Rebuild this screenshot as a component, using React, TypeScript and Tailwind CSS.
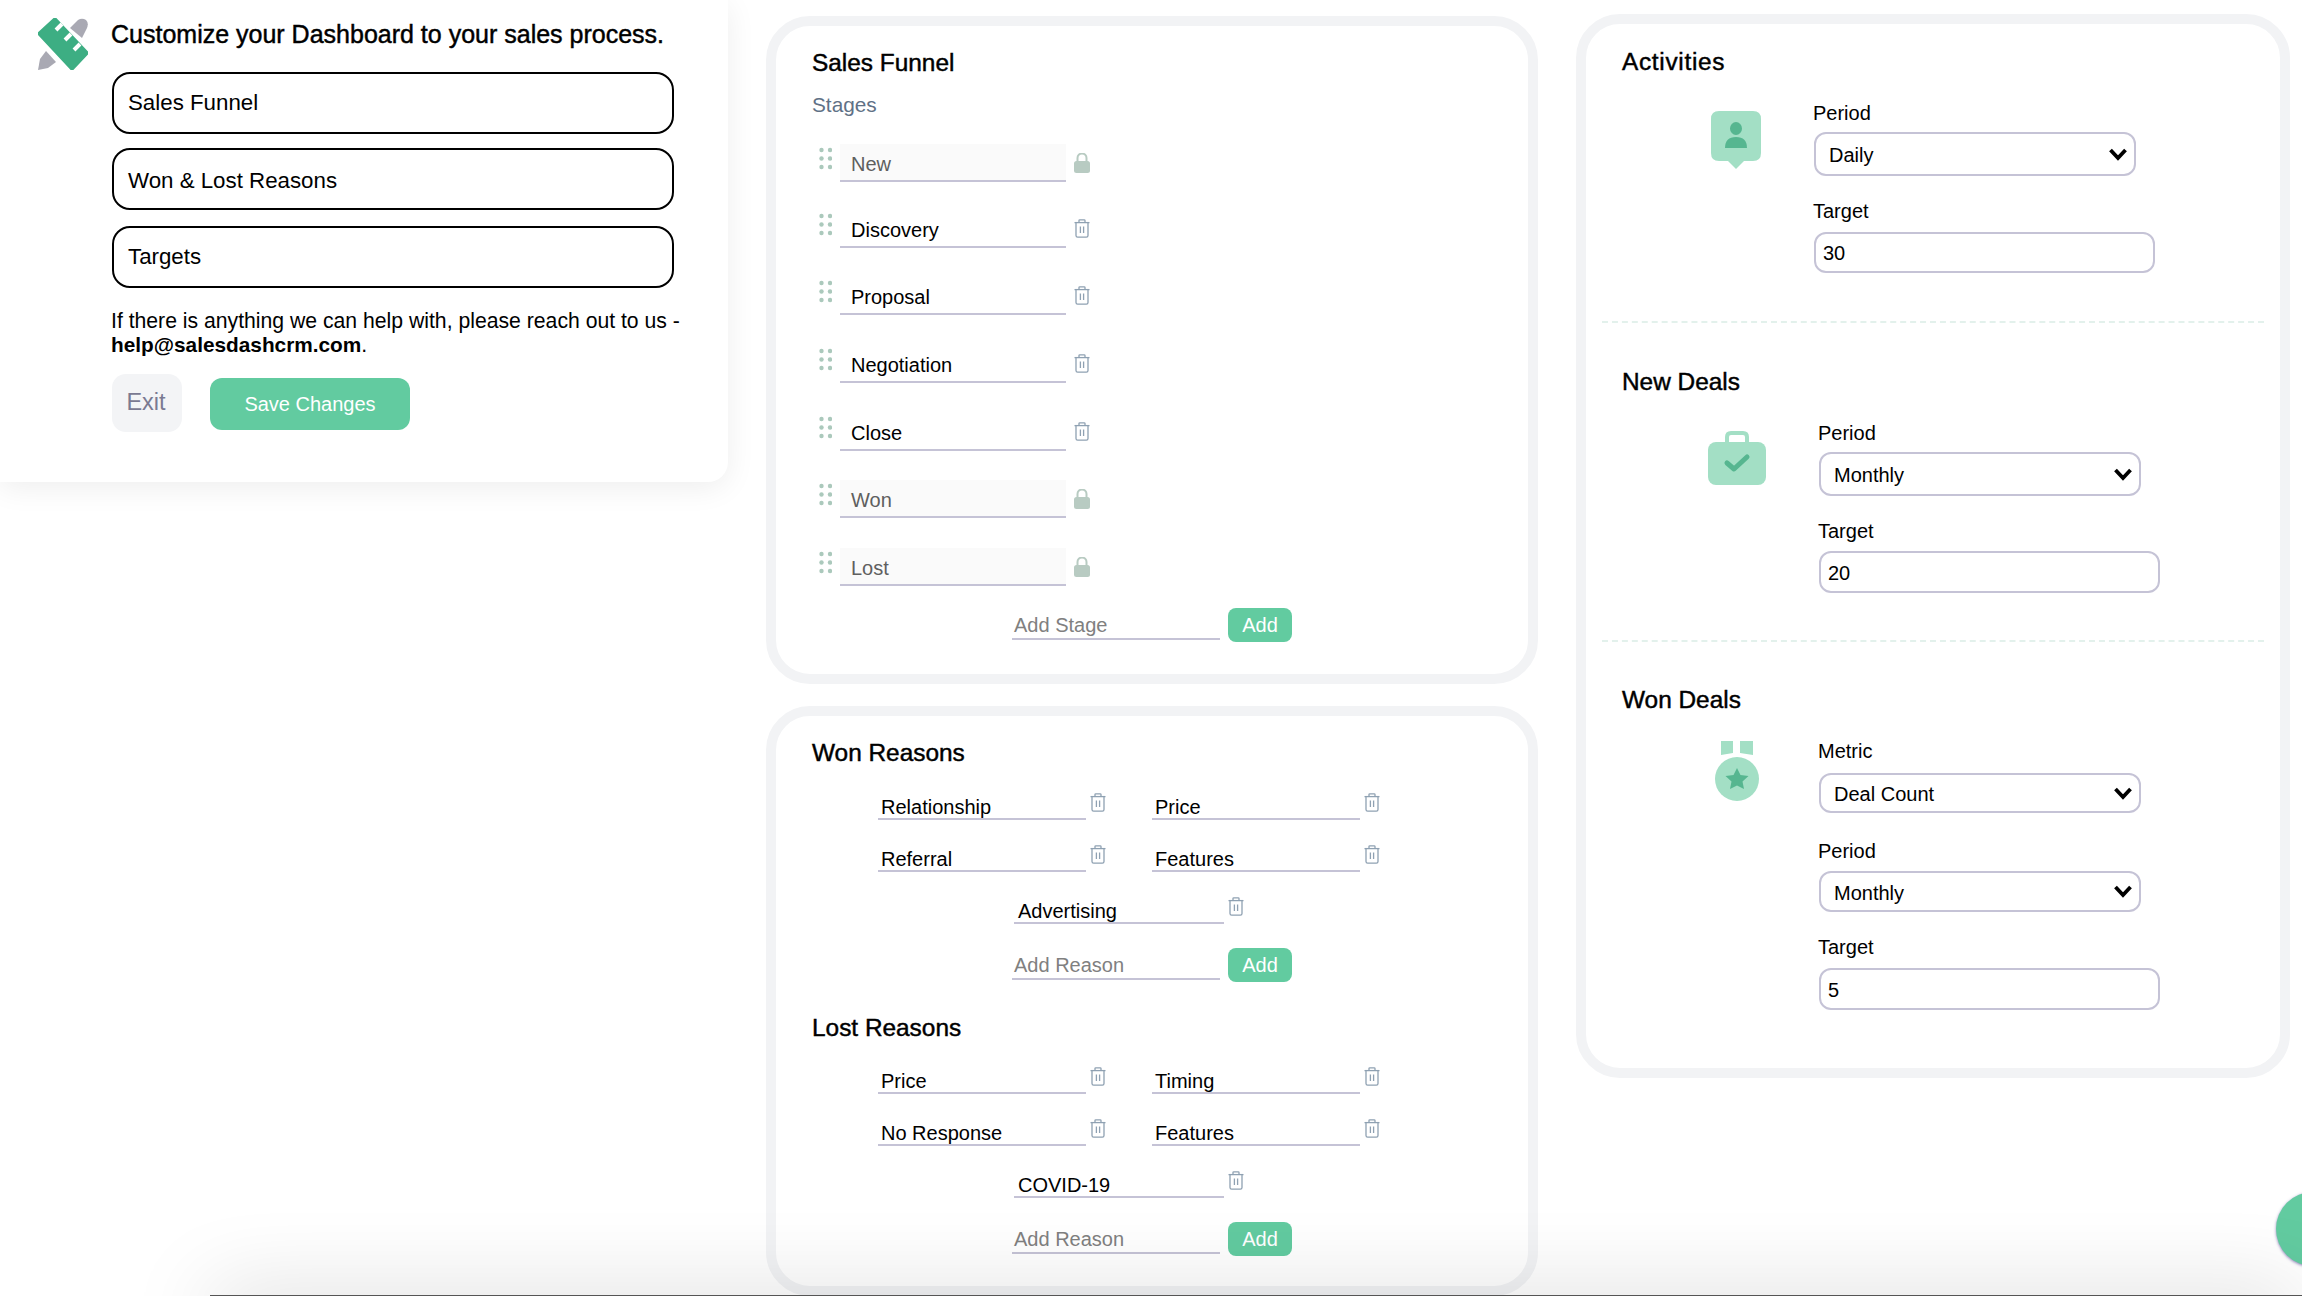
import React from "react";

function Logo() {
  return (
    <svg width="50" height="52" viewBox="0 0 50 52" className="block">
      <path d="M32 10 L40 2 Q44 -0.5 48 2 Q51 5 49 10 L44 20 Z" fill="#a9a9b3" />
      <path d="M0 52 L2 41 L8 33 L18 44 L10 50 Z" fill="#a9a9b3" />
      <path d="M17 0 L0 15.5 L34 52 L50 35 Z" fill="#3dae83" stroke="#3dae83" strokeWidth="2" strokeLinejoin="round" />
      <path d="M24 6 L18 12 M33 16 L27 22 M42 26 L36 32" stroke="#ffffff" strokeWidth="4" fill="none" />
    </svg>
  );
}

function Trash() {
  return (
    <svg width="16" height="19" viewBox="0 0 16 19" fill="none" stroke="#8fa1b2" strokeWidth="1.3" className="block shrink-0">
      <path d="M0.5 3.6 H15.5" />
      <path d="M5 3.4 V1.6 Q5 0.8 5.8 0.8 H10.2 Q11 0.8 11 1.6 V3.4" />
      <path d="M2 3.8 V16.6 Q2 18.2 3.6 18.2 H12.4 Q14 18.2 14 16.6 V3.8" />
      <path d="M6.4 7.5 V14 M9.6 7.5 V14" />
    </svg>
  );
}

function Lock() {
  return (
    <svg width="16" height="20" viewBox="0 0 16 20" className="block shrink-0">
      <path d="M3.5 9 V5 A4.5 4.5 0 0 1 12.5 5 V9" fill="none" stroke="#b8cbc2" strokeWidth="2" />
      <rect x="0" y="8" width="16" height="12" rx="2.5" fill="#b8cbc2" />
    </svg>
  );
}

function Dots() {
  const ys = [3, 11.5, 20];
  return (
    <svg width="13" height="23" viewBox="0 0 13 23" className="block shrink-0 mt-[3px]">
      {ys.map((y) => (
        <g key={y} fill="#abc9bc">
          <circle cx="2.5" cy={y} r="2.2" />
          <circle cx="11" cy={y} r="2.2" />
        </g>
      ))}
    </svg>
  );
}

function Chevron() {
  return (
    <svg width="18" height="13" viewBox="0 0 18 13" className="block" fill="none" stroke="#000" strokeWidth="3.8">
      <path d="M1.5 2 L9 10 L16.5 2" />
    </svg>
  );
}

function PersonIcon() {
  return (
    <svg width="50" height="58" viewBox="0 0 50 58" className="block">
      <path d="M8 0 H42 Q50 0 50 8 V42 Q50 50 42 50 H33 L25 58 L17 50 H8 Q0 50 0 42 V8 Q0 0 8 0 Z" fill="#a3dfc5" />
      <ellipse cx="25" cy="17.5" rx="6" ry="6.5" fill="#56b690" />
      <path d="M14 37 Q14 26 25 26 Q36 26 36 37 Z" fill="#56b690" />
    </svg>
  );
}

function CaseIcon() {
  return (
    <svg width="58" height="54" viewBox="0 0 58 54" className="block">
      <path d="M19 11 V6 Q19 2 23 2 H35 Q39 2 39 6 V11" fill="none" stroke="#a3dfc5" strokeWidth="4" />
      <rect x="0" y="11" width="58" height="43" rx="8" fill="#a3dfc5" />
      <path d="M19 32 L26 38 L39 26" fill="none" stroke="#56b690" strokeWidth="5" strokeLinecap="round" strokeLinejoin="round" />
    </svg>
  );
}

function MedalIcon() {
  return (
    <svg width="44" height="60" viewBox="0 0 44 60" className="block">
      <path d="M6 0 H18 V12 L6 14 Z" fill="#a3dfc5" />
      <path d="M25 0 H38 V14 L25 12 Z" fill="#a3dfc5" />
      <circle cx="22" cy="38" r="22" fill="#a3dfc5" />
      <path d="M22 27 L25.5 34 L33.5 35 L27.5 40.5 L29 48 L22 44.5 L15 48 L16.5 40.5 L10.5 35 L18.5 34 Z" fill="#56b690" />
    </svg>
  );
}

const titleCls =
  "h-[30px] text-[24.4px] leading-[30px] text-black [-webkit-text-stroke:0.45px_#000]";

function SideButton({ label, mt, pad }: { label: string; mt: string; pad?: string }) {
  return (
    <button className={`${mt} ${pad ?? ""} ml-px flex h-[62px] w-[562px] items-center rounded-[18px] border-[2.5px] border-black bg-white pl-[14px] text-left text-[22.3px] text-black`}>
      {label}
    </button>
  );
}

const stages = [
  { name: "New", locked: true, mt: "mt-[26px]" },
  { name: "Discovery", locked: false, mt: "mt-[28px]" },
  { name: "Proposal", locked: false, mt: "mt-[29px]" },
  { name: "Negotiation", locked: false, mt: "mt-[30px]" },
  { name: "Close", locked: false, mt: "mt-[30px]" },
  { name: "Won", locked: true, mt: "mt-[29px]" },
  { name: "Lost", locked: true, mt: "mt-[30px]" },
];

function StageRow({ name, locked, mt }: { name: string; locked: boolean; mt: string }) {
  return (
    <div className={`${mt} ml-[6px] flex h-[38px] items-start`}>
      <Dots />
      <div
        className={`ml-[8px] flex h-[38px] w-[226px] items-center border-b-2 border-[#c5c3d6] pl-[11px] pt-[3px] text-[20px] ${
          locked ? "bg-[#fafafa] text-[#5f5f5f]" : "text-black"
        }`}
      >
        {name}
      </div>
      <div className={`ml-[8px] flex h-[38px] items-center ${locked ? "" : "pb-[2px]"}`}>
        {locked ? <Lock /> : <Trash />}
      </div>
    </div>
  );
}

function AddRow({ placeholder, mt }: { placeholder: string; mt: string }) {
  return (
    <div className={`${mt} ml-[199px] flex h-[34px] items-start`}>
      <div className="flex h-[32px] w-[208px] items-center border-b-2 border-[#c5c3d6] pl-[2px] pt-[3px] text-[20px] text-[#808080]">
        {placeholder}
      </div>
      <button className="ml-[8px] h-[34px] w-[64px] rounded-[8px] bg-[#62cba0] text-[20px] text-white">Add</button>
    </div>
  );
}

function Reason({ name, wide }: { name: string; wide?: boolean }) {
  return (
    <div className="flex items-start">
      <div
        className={`flex h-[29px] items-end border-b-2 border-[#c5c3d6] text-[20px] leading-[22px] text-black ${
          wide ? "w-[210px] pl-[4px]" : "w-[208px] pl-[3px]"
        }`}
      >
        {name}
      </div>
      <div className="ml-[4px] mt-[2px]">
        <Trash />
      </div>
    </div>
  );
}

function ReasonGroup({ a, b, c, d, e, mt }: { a: string; b: string; c: string; d: string; e: string; mt: string }) {
  return (
    <>
      <div className={`${mt} ml-[65px] flex gap-[46px]`}>
        <Reason name={a} />
        <Reason name={b} />
      </div>
      <div className="mt-[23px] ml-[65px] flex gap-[46px]">
        <Reason name={c} />
        <Reason name={d} />
      </div>
      <div className="mt-[23px] ml-[201px]">
        <Reason name={e} wide />
      </div>
      <AddRow placeholder="Add Reason" mt="mt-[24px]" />
    </>
  );
}

function Label({ text, mt }: { text: string; mt: string }) {
  return <div className={`${mt} h-[26px] text-[20px] leading-[26px] text-black`}>{text}</div>;
}

function SelectBox({ value, mt, h }: { value: string; mt: string; h: string }) {
  return (
    <div className={`${mt} ${h} ml-px flex w-[322px] items-center justify-between rounded-[12px] border-2 border-[#c5c3d6] bg-white pl-[13px] pr-[7px] text-[20px] text-black`}>
      <span className="pt-[2px]">{value}</span>
      <Chevron />
    </div>
  );
}

function NumBox({ value, mt, h }: { value: string; mt: string; h: string }) {
  return (
    <div className={`${mt} ${h} ml-px flex w-[341px] items-center rounded-[12px] border-2 border-[#c5c3d6] bg-white pl-[7px] pt-[1px] text-[20px] text-black`}>
      {value}
    </div>
  );
}

export default function App() {
  return (
    <div className="relative flex h-[1296px] w-full items-start overflow-hidden bg-white font-['Liberation_Sans',Arial,sans-serif]">
      {/* Left panel */}
      <aside className="flex h-[482px] w-[728px] shrink-0 rounded-br-[20px] bg-white shadow-[0_6px_30px_rgba(0,0,0,0.07)]">
        <div className="ml-[38px] mt-[18px]">
          <Logo />
        </div>
        <div className="ml-[23px] pt-[20px]">
          <div className="h-[28px] whitespace-nowrap text-[25px] leading-[28px] text-black [-webkit-text-stroke:0.45px_#000]">
            Customize your Dashboard to your sales process.
          </div>
          <SideButton label="Sales Funnel" mt="mt-[24px]" />
          <SideButton label="Won & Lost Reasons" mt="mt-[14px]" pad="pt-[3px]" />
          <SideButton label="Targets" mt="mt-[16px]" />
          <p className="mt-[21px] w-[600px] text-[21.2px] leading-[24px] text-black">
            If there is anything we can help with, please reach out to us -{" "}
            <br />
            <span className="text-[20.8px] font-bold">help@salesdashcrm.com</span>.
          </p>
          <div className="mt-[17px] ml-px flex items-center gap-[28px]">
            <button className="h-[58px] w-[70px] rounded-[14px] bg-[#f3f4f6] pr-[2px] text-[23.5px] text-[#7a7a92]">Exit</button>
            <button className="mt-[2px] h-[52px] w-[200px] rounded-[12px] bg-[#62cba0] text-[20px] text-white">Save Changes</button>
          </div>
        </div>
      </aside>

      {/* Middle column */}
      <div className="ml-[38px] mt-[16px] w-[772px] shrink-0">
        <section className="h-[668px] rounded-[44px] border-[10px] border-[#f2f3f5] bg-white pl-[37px] pt-[22px]">
          <h2 className={`${titleCls} -ml-px`}>Sales Funnel</h2>
          <div className="-ml-px mt-[14px] h-[26px] text-[20.8px] leading-[26px] text-[#5f7186]">Stages</div>
          {stages.map((s) => (
            <StageRow key={s.name} {...s} />
          ))}
          <AddRow placeholder="Add Stage" mt="mt-[22px]" />
        </section>

        <section className="mt-[22px] h-[590px] rounded-[44px] border-[10px] border-[#f2f3f5] bg-white pl-[37px] pt-[22px]">
          <h2 className={`${titleCls} -ml-px`}>Won Reasons</h2>
          <ReasonGroup a="Relationship" b="Price" c="Referral" d="Features" e="Advertising" mt="mt-[23px]" />
          <h2 className={`${titleCls} -ml-px mt-[31px]`}>Lost Reasons</h2>
          <ReasonGroup a="Price" b="Timing" c="No Response" d="Features" e="COVID-19" mt="mt-[22px]" />
        </section>
      </div>

      {/* Right column */}
      <section className="ml-[38px] mt-[14px] h-[1064px] w-[714px] shrink-0 rounded-[44px] border-[10px] border-[#f2f3f5] bg-white pl-[36px] pt-[23px]">
        <h2 className={`${titleCls} tracking-[0.7px]`}>Activities</h2>
        <div className="mt-[23px] flex">
          <div className="ml-[89px] mt-[11px]">
            <PersonIcon />
          </div>
          <div className="ml-[52px]">
            <Label text="Period" mt="mt-0" />
            <SelectBox value="Daily" mt="mt-[6px]" h="h-[44px]" />
            <Label text="Target" mt="mt-[22px]" />
            <NumBox value="30" mt="mt-[8px]" h="h-[41px]" />
          </div>
        </div>
        <div className="-ml-[20px] mt-[48px] w-[662px] border-t-2 border-dashed border-[#e3f1ec]" />

        <h2 className={`${titleCls} mt-[44px]`}>New Deals</h2>
        <div className="mt-[23px] flex">
          <div className="ml-[86px] mt-[11px]">
            <CaseIcon />
          </div>
          <div className="ml-[52px]">
            <Label text="Period" mt="mt-0" />
            <SelectBox value="Monthly" mt="mt-[6px]" h="h-[44px]" />
            <Label text="Target" mt="mt-[22px]" />
            <NumBox value="20" mt="mt-[7px]" h="h-[42px]" />
          </div>
        </div>
        <div className="-ml-[20px] mt-[47px] w-[662px] border-t-2 border-dashed border-[#e3f1ec]" />

        <h2 className={`${titleCls} mt-[43px]`}>Won Deals</h2>
        <div className="mt-[23px] flex">
          <div className="ml-[93px] mt-[3px]">
            <MedalIcon />
          </div>
          <div className="ml-[59px]">
            <Label text="Metric" mt="mt-0" />
            <SelectBox value="Deal Count" mt="mt-[9px]" h="h-[40px]" />
            <Label text="Period" mt="mt-[25px]" />
            <SelectBox value="Monthly" mt="mt-[7px]" h="h-[41px]" />
            <Label text="Target" mt="mt-[22px]" />
            <NumBox value="5" mt="mt-[8px]" h="h-[42px]" />
          </div>
        </div>
      </section>

      {/* Floating help button, cut by the window edge */}
      <div className="absolute left-[2276px] top-[1192px] h-[74px] w-[74px] rounded-full bg-[#62cba0] shadow-[0_1px_3px_rgba(70,50,140,0.6)]" />
      {/* Bar below the fold: only its top edge and shadow show */}
      <div className="absolute left-[210px] right-0 top-[1295px] h-[40px] bg-[#555555] shadow-[0_0_85px_rgba(0,0,0,0.18)]" />
    </div>
  );
}
